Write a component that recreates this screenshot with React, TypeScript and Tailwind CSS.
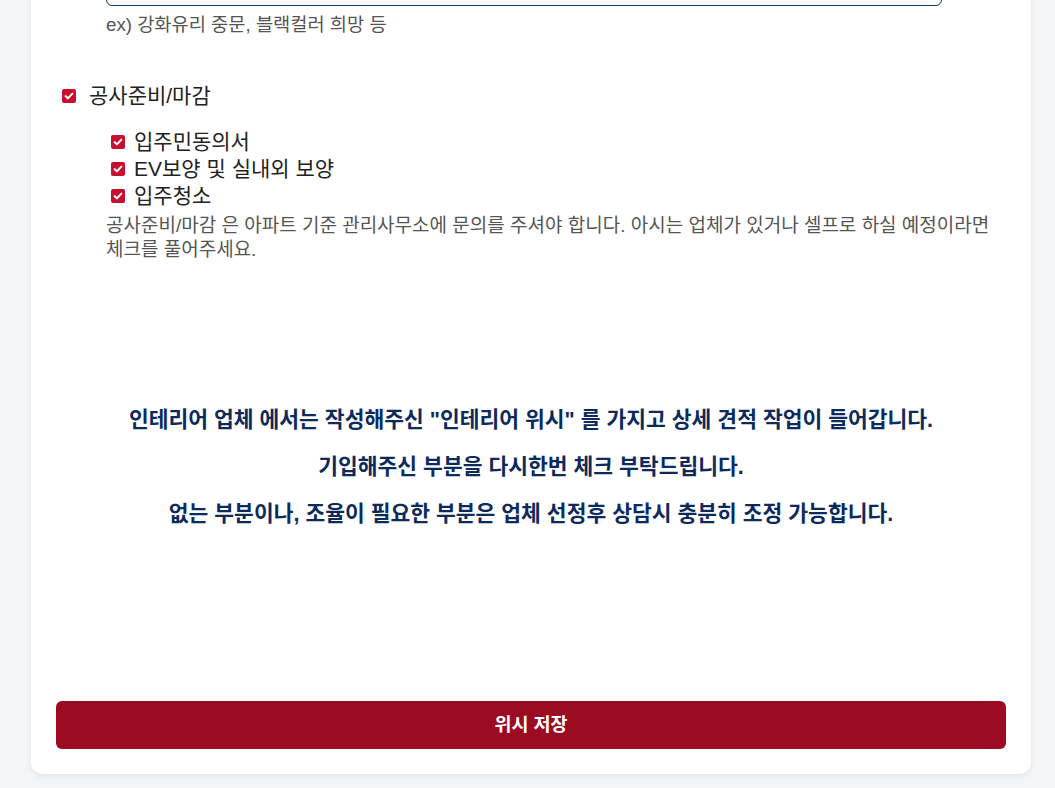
import React from "react";

const font = { fontFamily: '"Liberation Sans", "Noto Sans CJK KR", sans-serif' };

function Check() {
  return (
    <span className="flex h-[14px] w-[14px] shrink-0 items-center justify-center rounded-[2px] bg-[#c8102e]">
      <svg viewBox="0 0 12 12" className="h-[10px] w-[10px]" fill="none">
        <path d="M2 6.2 L4.7 8.8 L10 3.2" stroke="white" strokeWidth="2.4" strokeLinecap="round" strokeLinejoin="round" />
      </svg>
    </span>
  );
}

export default function App() {
  const subs = ["입주민동의서", "EV보양 및 실내외 보양", "입주청소"];
  return (
    <div className="h-[788px] overflow-hidden bg-[#f4f5f7]" style={font}>
      <div className="ml-[31px] w-[1000px] rounded-b-xl bg-white px-[25px] pb-[25px] shadow-[0_2px_6px_rgba(0,0,0,0.08)]">
        <div className="pl-[50px]">
          <div className="-mt-[40px] h-[46px] w-[836px] rounded-md border border-[#0b3a6d] bg-white" />
          <p className="mt-[7px] text-[18.7px] leading-[24px] text-[#555]">ex) 강화유리 중문, 블랙컬러 희망 등</p>
        </div>

        <label className="mt-[45px] flex items-center gap-[13px] pl-[6px] text-[21px] leading-[27px] text-[#222]">
          <Check />
          <span>공사준비/마감</span>
        </label>

        <div className="mt-[19px] flex flex-col pl-[55px]">
          {subs.map((s) => (
            <label key={s} className="flex items-center gap-[9px] text-[21px] leading-[27px] text-[#222]">
              <Check />
              <span>{s}</span>
            </label>
          ))}
        </div>
        <p className="mt-[5px] break-keep pl-[50px] text-[19px] leading-[24px] text-[#555]">
          공사준비/마감 은 아파트 기준 관리사무소에 문의를 주셔야 합니다. 아시는 업체가 있거나 셀프로 하실 예정이라면 체크를 풀어주세요.
        </p>

        <div className="mt-[145px] flex flex-col items-center gap-[20px] text-center text-[21.5px] font-bold leading-[27px] text-[#0c2a5c]">
          <p>인테리어 업체 에서는 작성해주신 "인테리어 위시" 를 가지고 상세 견적 작업이 들어갑니다.</p>
          <p>기입해주신 부분을 다시한번 체크 부탁드립니다.</p>
          <p>없는 부분이나, 조율이 필요한 부분은 업체 선정후 상담시 충분히 조정 가능합니다.</p>
        </div>

        <button className="mt-[173px] flex h-[48px] w-full items-center justify-center rounded-md bg-[#9b0b22] text-[18.5px] font-bold text-white">
          위시 저장
        </button>
      </div>
    </div>
  );
}
